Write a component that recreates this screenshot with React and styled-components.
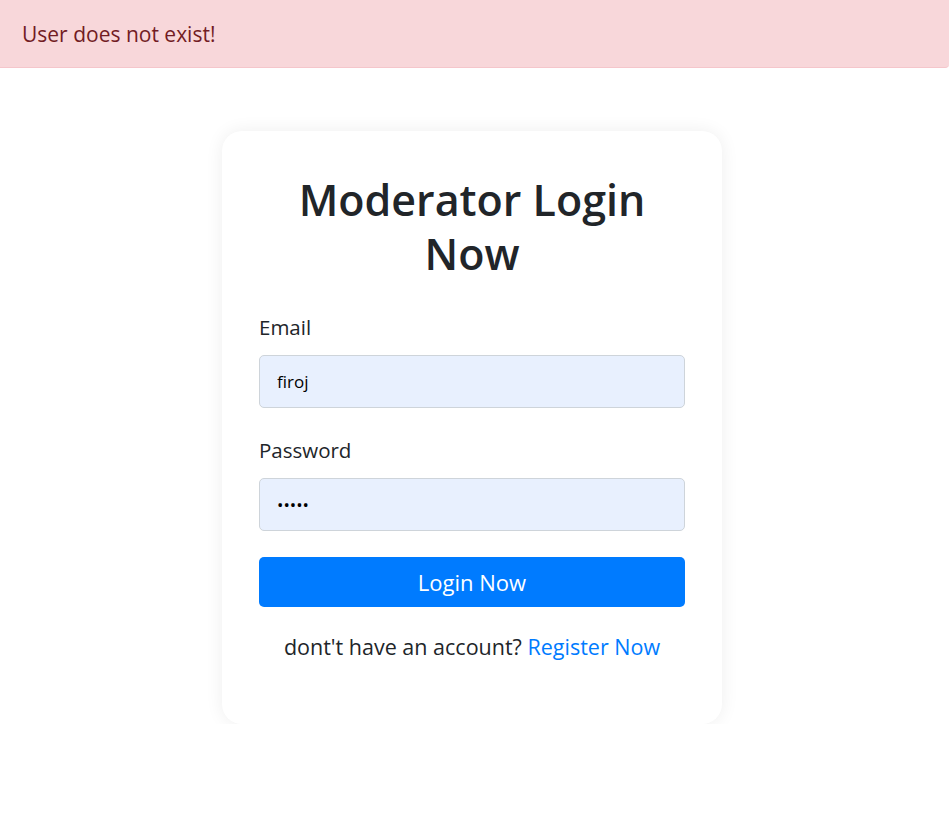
import React, { useState } from 'react';
import styled, { createGlobalStyle } from 'styled-components';

const GlobalStyle = createGlobalStyle`
  body {
    margin: 0;
    background: #fff;
    font-family: "Open Sans", "Noto Sans", sans-serif;
    color: #212529;
  }
  * { box-sizing: border-box; }
`;

const Alert = styled.div`
  height: 68px;
  display: flex;
  align-items: center;
  padding: 0 22px;
  background: #f8d7da;
  border-bottom: 1px solid #f5c6cb;
  border-bottom-right-radius: 4px;
  color: #721c24;
  font-size: 21px;
  margin-right: 1px;
`;

const Page = styled.div`
  display: flex;
  justify-content: center;
  padding: 63px 6px 0 0;
`;

const Card = styled.div`
  width: 500px;
  background: #fff;
  border-radius: 20px;
  box-shadow: 0 0 18px rgba(0, 0, 0, 0.07);
  padding: 42px 37px 62px;
`;

const Title = styled.h2`
  margin: 0 0 31px;
  font-size: 43px;
  font-weight: 600;
  line-height: 54px;
  text-align: center;
  color: #212529;
`;

const Form = styled.form`
  display: flex;
  flex-direction: column;
`;

const Label = styled.label`
  font-size: 20.5px;
  line-height: 30px;
  margin-bottom: 13px;
`;

const Input = styled.input`
  height: 53px;
  padding: 0 17px;
  border: 1px solid #ced4da;
  border-radius: 5px;
  background: #e8f0fe;
  font-family: inherit;
  font-size: 17px;
  color: #000;
  outline: none;
  margin-bottom: ${(p) => p.$gap || 27}px;
`;

const Button = styled.button`
  height: 50px;
  border: none;
  border-radius: 5px;
  background: #007bff;
  color: #fff;
  font-family: inherit;
  font-size: 22px;
  cursor: pointer;
  margin-bottom: 25px;
`;

const Footer = styled.p`
  margin: 0;
  text-align: center;
  font-size: 21.5px;
  line-height: 30px;

  a {
    color: #007bff;
    text-decoration: none;
  }
`;

export default function App() {
  const [email, setEmail] = useState('firoj');
  const [password, setPassword] = useState('12345');

  return (
    <>
      <GlobalStyle />
      <Alert>User does not exist!</Alert>
      <Page>
        <Card>
          <Title>Moderator Login Now</Title>
          <Form onSubmit={(e) => e.preventDefault()}>
            <Label htmlFor="email">Email</Label>
            <Input id="email" value={email} onChange={(e) => setEmail(e.target.value)} />
            <Label htmlFor="password">Password</Label>
            <Input
              id="password"
              type="password"
              $gap={26}
              value={password}
              onChange={(e) => setPassword(e.target.value)}
            />
            <Button type="submit">Login Now</Button>
          </Form>
          <Footer>
            dont't have an account? <a href="/register">Register Now</a>
          </Footer>
        </Card>
      </Page>
    </>
  );
}
